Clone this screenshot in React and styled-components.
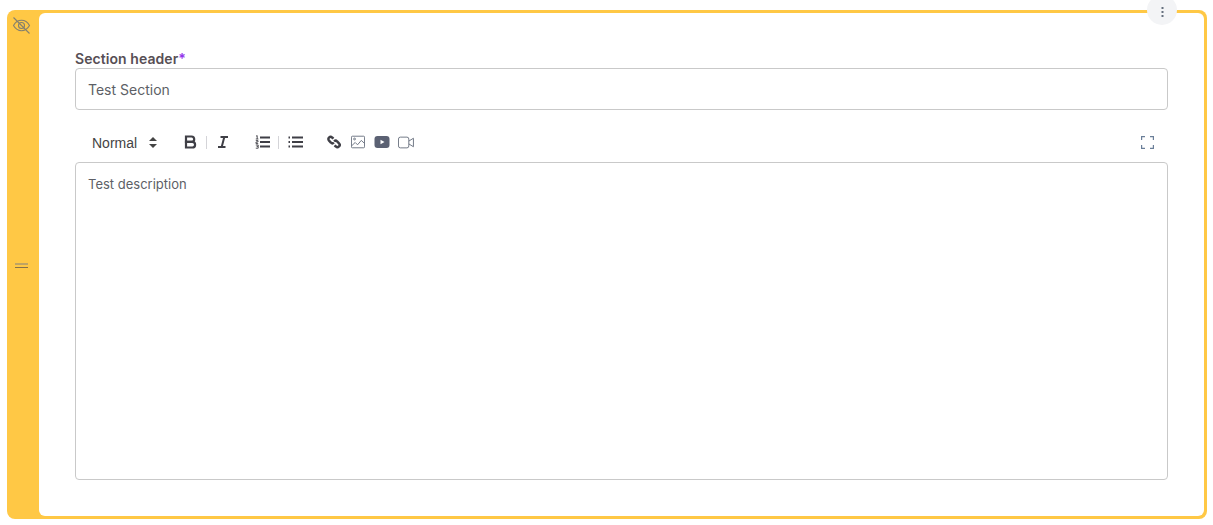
import React from "react";
import styled, { createGlobalStyle } from "styled-components";

const Global = createGlobalStyle`
  html, body { margin: 0; padding: 0; background: #fff; }
  body { font-family: Inter, "Liberation Sans", sans-serif; color: #4b5563; }
`;
const Page = styled.div`
  padding: 10px 6px 0 7px;
  height: 525px;
  box-sizing: border-box;
`;
const Card = styled.section`
  position: relative;
  display: flex;
  width: 1200px;
  height: 509px;
  box-sizing: border-box;
  background: #ffc845;
  border-radius: 8px;
  padding: 3px 3px 3px 0;
`;
const Handle = styled.div`
  position: relative;
  width: 32px;
  flex: none;
  display: flex;
  align-items: center;
  justify-content: center;
`;
const EyeSlot = styled.div`
  position: absolute;
  top: 3px;
  left: 5px;
  width: 19px;
  height: 19px;
  color: #85806d;
`;
const Grip = styled.div`
  width: 13px;
  height: 5px;
  margin-top: 1px;
  margin-left: -3px;
  border-top: 2px solid #bfa463;
  border-bottom: 1px solid #85714a;
  box-sizing: border-box;
`;
const Body = styled.div`
  flex: 1;
  min-width: 0;
  background: #fff;
  border-radius: 6px;
  padding: 37px 36px 36px;
  display: flex;
  flex-direction: column;
`;
const Label = styled.label`
  font-size: 14px;
  line-height: 18px;
  font-weight: 600;
  letter-spacing: 0.07px;
  color: #574f55;
`;
const Star = styled.span`
  color: #9333ea;
`;
const TextInput = styled.div`
  height: 42px;
  box-sizing: border-box;
  border: 1px solid #c9c9c9;
  border-radius: 4px;
  padding: 0 12px;
  display: flex;
  align-items: center;
  font-size: 14px;
  color: #5d5f66;
`;
const Toolbar = styled.div`
  height: 52px;
  display: flex;
  align-items: center;
  color: #444;
  padding-top: 12px;
  box-sizing: border-box;
`;
const Select = styled.div`
  width: 65px;
  margin-left: 17px;
  display: flex;
  align-items: center;
  justify-content: space-between;
  font: 14px/20px "Liberation Sans", Arial, sans-serif;
  color: #444;
  padding-top: 1px;
`;
const Tool = styled.span`
  display: flex;
  width: ${(p) => p.$w || 24}px;
  height: 20px;
  align-items: center;
  justify-content: center;
  flex: none;
  margin-left: ${(p) => p.$ml || 0}px;
  color: #3f3f46;
`;
const Divider = styled.span`
  width: 1px;
  height: 13px;
  background: #d4d4d8;
  flex: none;
  margin-left: 4px;
`;
const Spacer = styled.div`
  flex: 1;
`;
const Editor = styled.div`
  flex: 1;
  box-sizing: border-box;
  border: 1px solid #c9c9c9;
  border-radius: 4px;
  padding: 13px 12px;
  font-size: 13px;
  line-height: 16px;
  color: #5d5f66;
`;
const MenuButton = styled.button`
  position: absolute;
  top: -15px;
  right: 30px;
  width: 30px;
  height: 30px;
  padding: 4px 0 0;
  border: 0;
  border-radius: 50%;
  background: #f3f4f6;
  display: flex;
  align-items: center;
  justify-content: center;
  color: #66707e;
`;

const EyeOff = () => (
  <svg width="19" height="19" viewBox="0 0 19 19" fill="none" stroke="currentColor" strokeWidth="1.1">
    <path d="M1.5 9.5C3.5 6 6.2 4.3 9.5 4.3S15.5 6 17.5 9.5C15.5 13 12.8 14.7 9.5 14.7S3.5 13 1.5 9.5Z" />
    <circle cx="9.5" cy="9.5" r="3" />
    <path d="M1.5 1.5L17.5 17.5" />
  </svg>
);
const Bold = () => (
  <svg width="13" height="14" viewBox="0 0 13 14" fill="none" stroke="currentColor" strokeWidth="2.2">
    <path d="M2 1.5H7.5a2.7 2.7 0 0 1 0 5.4H2Z" />
    <path d="M2 6.9H8.3a2.8 2.8 0 0 1 0 5.6H2Z" />
  </svg>
);
const Italic = () => (
  <svg width="12" height="14" viewBox="0 0 12 14" fill="none" stroke="currentColor" strokeWidth="2">
    <path d="M3.5 2H11M1 12H8.5M7.3 2L4.7 12" />
  </svg>
);
const Ordered = () => (
  <svg width="15" height="14" viewBox="0 0 15 14" fill="none">
    <path d="M5 2.5H15M5 7H15M5 11.5H15" stroke="currentColor" strokeWidth="1.8" />
    <path d="M1 1.2L2.2 .6V4M.8 4H3.4M.8 5.6H3V7H1V8.6H3.2M.8 10H3.2V11.4H1.6M3.2 11.4V13.2H.8" stroke="currentColor" strokeWidth=".9" />
  </svg>
);
const Bullet = () => (
  <svg width="15" height="14" viewBox="0 0 15 14" fill="none" stroke="currentColor" strokeWidth="1.8">
    <path d="M4 2.5H15M4 7H15M4 11.5H15M.5 2.5H2M.5 7H2M.5 11.5H2" />
  </svg>
);
const LinkIcon = () => (
  <svg width="14" height="14" viewBox="0 0 16 16" fill="none" stroke="currentColor" strokeWidth="2.8">
    <path d="M7.4 4.2L5.9 2.9A2.5 2.5 0 0 0 2.3 6.5L4.4 8.6A2.5 2.5 0 0 0 7.9 8.8" />
    <path d="M8.6 11.8L10.1 13.1A2.5 2.5 0 0 0 13.7 9.5L11.6 7.4A2.5 2.5 0 0 0 8.1 7.2" />
  </svg>
);
const ImageIcon = () => (
  <svg width="14" height="14" viewBox="0 0 15 14" fill="none" stroke="#6b7280" strokeWidth="1">
    <rect x=".5" y=".8" width="14" height="12.4" rx="1" />
    <circle cx="3.8" cy="3.8" r="1" />
    <path d="M.8 11L4.5 7.5L7 10L11 5.3L14.5 8.5" />
  </svg>
);
const YouTube = () => (
  <svg width="16" height="12" viewBox="0 0 15 12">
    <rect width="15" height="12" rx="3" fill="#5b6173" />
    <path d="M6 3.8L10 6L6 8.2Z" fill="#fff" />
  </svg>
);
const Video = () => (
  <svg width="16" height="13" viewBox="0 0 17 13" fill="none" stroke="#6b7280" strokeWidth="1">
    <rect x=".5" y=".8" width="11" height="11.4" rx="2" />
    <path d="M11.5 5L16.4 2V11L11.5 8" />
  </svg>
);
const Fullscreen = () => (
  <svg width="13" height="13" viewBox="0 0 13 13" fill="none" stroke="#6b7f99" strokeWidth="1.2">
    <path d="M.6 4V.6H4M9 .6H12.4V4M.6 9V12.4H4M9 12.4H12.4V9" />
  </svg>
);
const Dots = () => (
  <svg width="3" height="11" viewBox="0 0 3 11" fill="currentColor">
    <rect x=".5" y="0" width="2" height="2" />
    <rect x=".5" y="4" width="2" height="2" />
    <rect x=".5" y="8" width="2" height="2" />
  </svg>
);
const Updown = () => (
  <svg width="8" height="11" viewBox="0 0 8 11" fill="currentColor">
    <path d="M4 0L8 4H0ZM4 11L0 7H8Z" />
  </svg>
);

export default function App() {
  return (
    <Page>
      <Global />
      <Card>
        <Handle>
          <EyeSlot><EyeOff /></EyeSlot>
          <Grip />
        </Handle>
        <Body>
          <Label>Section header<Star>*</Star></Label>
          <TextInput>Test Section</TextInput>
          <Toolbar>
            <Select>Normal <Updown /></Select>
            <Tool $ml={21}><Bold /></Tool>
            <Divider />
            <Tool $w={31}><Italic /></Tool>
            <Tool $ml={12}><Ordered /></Tool>
            <Divider />
            <Tool $w={32}><Bullet /></Tool>
            <Tool $ml={11}><LinkIcon /></Tool>
            <Tool><ImageIcon /></Tool>
            <Tool><YouTube /></Tool>
            <Tool><Video /></Tool>
            <Spacer />
            <Tool $w={42}><Fullscreen /></Tool>
          </Toolbar>
          <Editor>Test description</Editor>
        </Body>
        <MenuButton aria-label="More"><Dots /></MenuButton>
      </Card>
    </Page>
  );
}
